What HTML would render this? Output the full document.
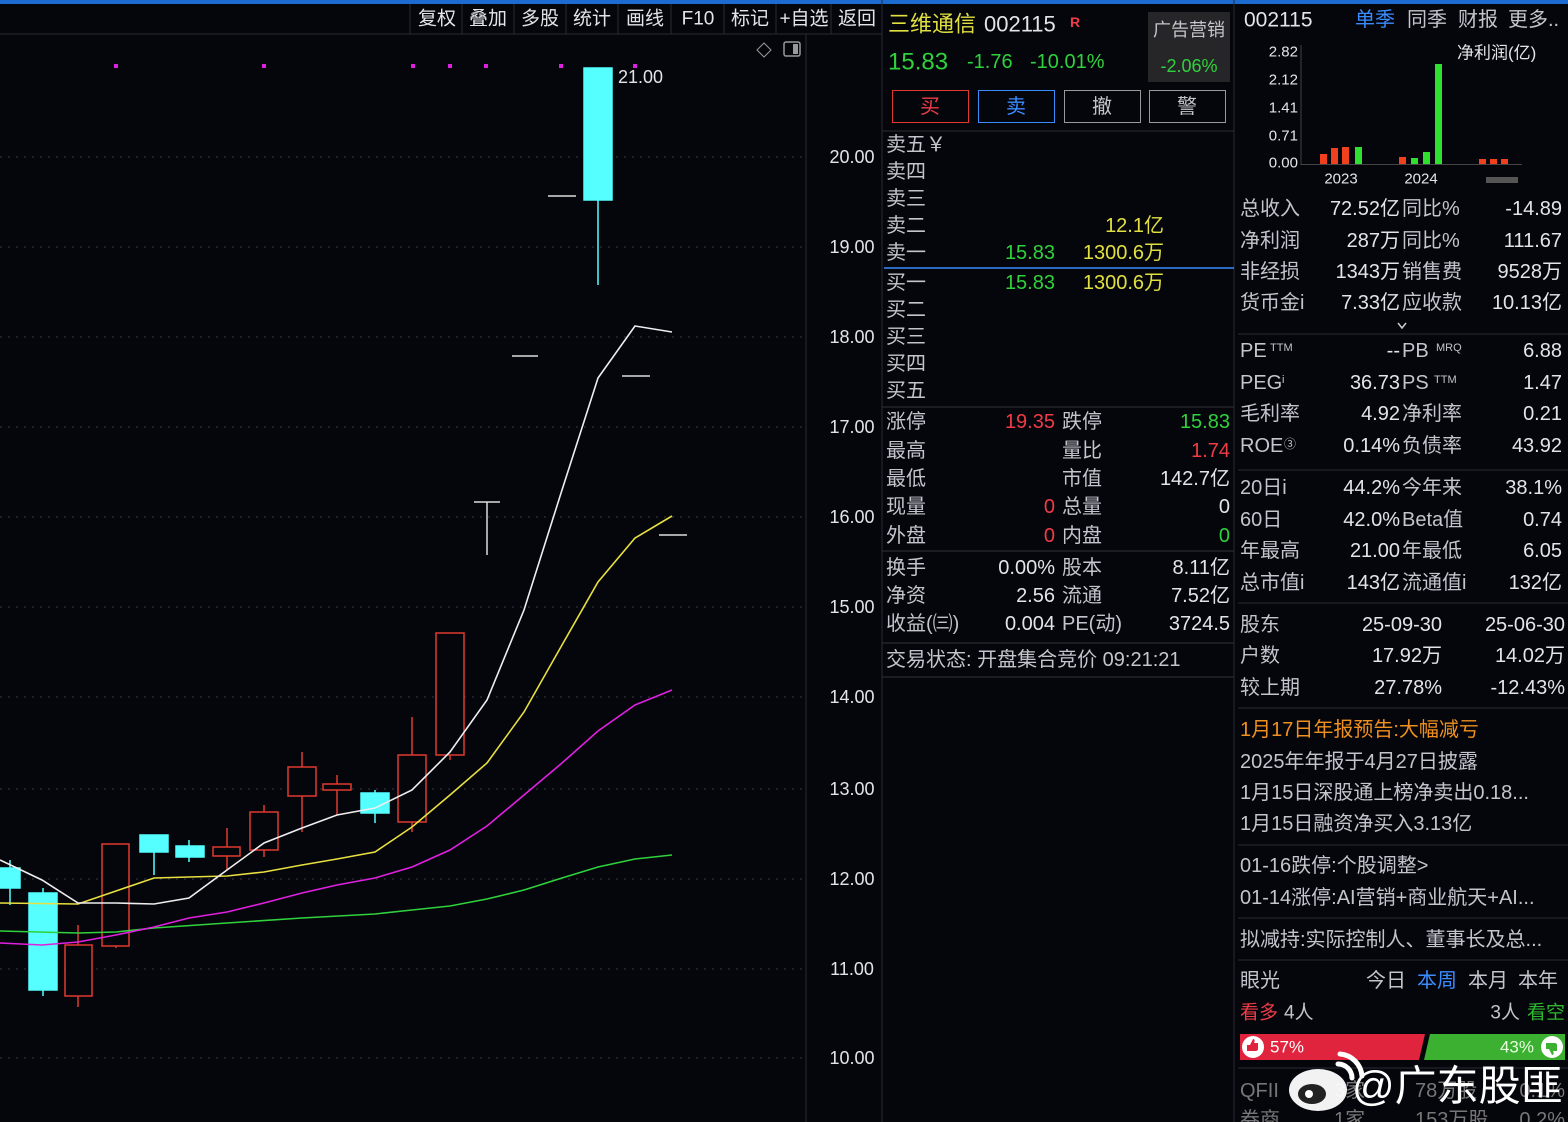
<!DOCTYPE html>
<html><head><meta charset="utf-8"><style>
html,body{margin:0;padding:0;background:#05050c;overflow:hidden}
svg{display:block}
text{font-family:"Liberation Sans","Noto Sans CJK SC",sans-serif;dominant-baseline:central}
.l{fill:#c4c4cc}.v{fill:#e4e4e8}.r{fill:#f03c46}.g{fill:#2fd23c}.y{fill:#e0e040}.b{fill:#3a8cff}
.e{text-anchor:end}.m{text-anchor:middle}
</style></head><body>
<svg width="1568" height="1122" viewBox="0 0 1568 1122" xmlns="http://www.w3.org/2000/svg" font-size="20">
<rect width="1568" height="1122" fill="#05050c"/>
<rect width="1568" height="4" fill="#1c6bd0"/>
<!-- toolbar -->
<line x1="0" y1="34" x2="882" y2="34" stroke="#2a2a33"/>
<line x1="410" y1="4" x2="410" y2="34" stroke="#2a2a33"/>
<g font-size="19">
<text x="437" y="19" class="m v">复权</text><text x="488" y="19" class="m v">叠加</text><text x="540" y="19" class="m v">多股</text><text x="592" y="19" class="m v">统计</text><text x="645" y="19" class="m v">画线</text><text x="698" y="19" class="m v">F10</text><text x="750" y="19" class="m v">标记</text><text x="804" y="19" class="m v">+自选</text><text x="857" y="19" class="m v">返回</text>
</g>
<g stroke="#2a2a33"><line x1="462" y1="4" x2="462" y2="34"/><line x1="514" y1="4" x2="514" y2="34"/><line x1="566" y1="4" x2="566" y2="34"/><line x1="618" y1="4" x2="618" y2="34"/><line x1="671" y1="4" x2="671" y2="34"/><line x1="724" y1="4" x2="724" y2="34"/><line x1="776" y1="4" x2="776" y2="34"/><line x1="831" y1="4" x2="831" y2="34"/></g>
<!-- axis -->
<line x1="806" y1="34" x2="806" y2="1122" stroke="#2a2a33"/>
<line x1="882" y1="0" x2="882" y2="1122" stroke="#2a2a33"/>
<line x1="1234" y1="0" x2="1234" y2="1122" stroke="#2a2a33"/>
<path d="M764 43l7 7-7 7-7-7z" fill="none" stroke="#999"/>
<rect x="784" y="42" width="16" height="14" rx="2" fill="none" stroke="#999" stroke-width="1.5"/><rect x="793" y="44" width="5" height="10" fill="#999"/>
<g font-size="18">
<text x="852" y="157" class="m v">20.00</text><text x="852" y="247" class="m v">19.00</text><text x="852" y="337" class="m v">18.00</text><text x="852" y="427" class="m v">17.00</text><text x="852" y="517" class="m v">16.00</text><text x="852" y="607" class="m v">15.00</text><text x="852" y="697" class="m v">14.00</text><text x="852" y="789" class="m v">13.00</text><text x="852" y="879" class="m v">12.00</text><text x="852" y="969" class="m v">11.00</text><text x="852" y="1058" class="m v">10.00</text>
</g>
<g stroke="#3a3a44" stroke-dasharray="2 6">
<line x1="0" y1="157" x2="806" y2="157"/><line x1="0" y1="247" x2="806" y2="247"/><line x1="0" y1="337" x2="806" y2="337"/><line x1="0" y1="427" x2="806" y2="427"/><line x1="0" y1="517" x2="806" y2="517"/><line x1="0" y1="607" x2="806" y2="607"/><line x1="0" y1="697" x2="806" y2="697"/><line x1="0" y1="789" x2="806" y2="789"/><line x1="0" y1="879" x2="806" y2="879"/><line x1="0" y1="969" x2="806" y2="969"/><line x1="0" y1="1058" x2="806" y2="1058"/>
</g>
<g fill="#e020e0"><rect x="114" y="64" width="4" height="4"/><rect x="262" y="64" width="4" height="4"/><rect x="411" y="64" width="4" height="4"/><rect x="448" y="64" width="4" height="4"/><rect x="484" y="64" width="4" height="4"/><rect x="559" y="64" width="4" height="4"/><rect x="633" y="64" width="4" height="4"/></g>
<!-- candles -->
<g stroke="#5ff" stroke-width="1.5" fill="#5ff">
<line x1="10" y1="860" x2="10" y2="905"/><rect x="0" y="868" width="20" height="20"/>
<line x1="43" y1="888" x2="43" y2="996"/><rect x="29" y="893" width="28" height="97"/>
<line x1="154" y1="850" x2="154" y2="875"/><rect x="140" y="835" width="28" height="17"/>
<line x1="189" y1="840" x2="189" y2="862"/><rect x="176" y="846" width="28" height="11"/>
<line x1="375" y1="790" x2="375" y2="823"/><rect x="361" y="793" width="28" height="20"/>
<line x1="598" y1="200" x2="598" y2="285"/><rect x="584" y="68" width="28" height="132"/>
</g>
<g stroke="#e03a30" stroke-width="1.5" fill="none">
<line x1="78" y1="925" x2="78" y2="1007"/><rect x="65" y="945" width="27" height="51" fill="#05050c"/>
<line x1="116" y1="844" x2="116" y2="948"/><rect x="102" y="844" width="27" height="102" fill="#05050c"/>
<line x1="227" y1="828" x2="227" y2="870"/><rect x="213" y="847" width="27" height="9" fill="#05050c"/>
<line x1="264" y1="805" x2="264" y2="857"/><rect x="250" y="812" width="28" height="38" fill="#05050c"/>
<line x1="302" y1="752" x2="302" y2="832"/><rect x="288" y="767" width="28" height="29" fill="#05050c"/>
<line x1="337" y1="775" x2="337" y2="815"/><rect x="323" y="784" width="28" height="6" fill="#05050c"/>
<line x1="412" y1="717" x2="412" y2="832"/><rect x="398" y="755" width="28" height="67" fill="#05050c"/>
<line x1="450" y1="633" x2="450" y2="760"/><rect x="436" y="633" width="28" height="122" fill="#05050c"/>
</g>
<g stroke="#ddd" stroke-width="1.5"><line x1="474" y1="502" x2="500" y2="502"/><line x1="487" y1="502" x2="487" y2="555"/><line x1="512" y1="356" x2="538" y2="356"/><line x1="548" y1="196" x2="576" y2="196"/><line x1="622" y1="376" x2="650" y2="376"/><line x1="659" y1="535" x2="687" y2="535"/></g>
<text x="618" y="77" class="v" font-size="18">21.00</text>
<!-- MAs -->
<g fill="none" stroke-width="1.6">
<polyline stroke="#2fd23c" points="0,931 78,933 116,932 154,928 227,923 302,918 375,914 412,910 450,906 487,899 524,890 562,878 598,867 635,859 672,855"/>
<polyline stroke="#e020e0" points="0,943 42,945 78,942 116,935 154,927 189,918 227,912 264,903 302,893 337,885 375,878 412,867 450,850 487,826 524,795 562,763 598,731 635,705 672,690"/>
<polyline stroke="#e8e040" points="0,903 78,904 154,878 189,877 227,876 264,872 302,865 337,859 375,852 412,827 450,795 487,763 524,712 562,645 598,582 635,538 672,516"/>
<polyline stroke="#eeeeee" points="0,860 42,880 78,903 116,903 154,904 189,898 227,870 264,843 302,828 337,815 375,808 412,790 450,752 487,700 524,610 562,490 598,378 635,326 672,332"/>
</g>
<!-- middle panel -->
<text x="888" y="24" class="y" font-size="22">三维通信</text><text x="984" y="24" class="v" font-size="22">002115</text><text x="1070" y="22" class="r" font-size="14" font-weight="bold">R</text>
<rect x="1148" y="12" width="82" height="70" fill="#262628"/>
<text x="1189" y="30" class="m l" font-size="18">广告营销</text><text x="1189" y="66" class="m g" font-size="18">-2.06%</text>
<text x="888" y="62" class="g" font-size="24">15.83</text><text x="967" y="62" class="g">-1.76</text><text x="1030" y="62" class="g">-10.01%</text>
<rect x="892.5" y="90.5" width="76" height="32" fill="none" stroke="#e03a30"/><text x="930" y="107" class="m r">买</text>
<rect x="978.5" y="90.5" width="76" height="32" fill="none" stroke="#3a8cff"/><text x="1016" y="107" class="m b">卖</text>
<rect x="1064.5" y="90.5" width="76" height="32" fill="none" stroke="#999"/><text x="1102" y="107" class="m l">撤</text>
<rect x="1149.5" y="90.5" width="76" height="32" fill="none" stroke="#999"/><text x="1187" y="107" class="m l">警</text>
<line x1="882" y1="131" x2="1234" y2="131" stroke="#2a2a33"/>
<text x="886" y="145" class="l">卖五￥</text><text x="886" y="172" class="l">卖四</text><text x="886" y="199" class="l">卖三</text><text x="886" y="226" class="l">卖二</text><text x="886" y="253" class="l">卖一</text>
<text x="1164" y="226" class="e y">12.1亿</text><text x="1055" y="253" class="e g">15.83</text><text x="1164" y="253" class="e y">1300.6万</text>
<line x1="884" y1="268" x2="1234" y2="268" stroke="#3a8cff" stroke-width="1.5"/>
<text x="886" y="283" class="l">买一</text><text x="886" y="310" class="l">买二</text><text x="886" y="337" class="l">买三</text><text x="886" y="364" class="l">买四</text><text x="886" y="391" class="l">买五</text>
<text x="1055" y="283" class="e g">15.83</text><text x="1164" y="283" class="e y">1300.6万</text>
<line x1="882" y1="407" x2="1234" y2="407" stroke="#333"/>
<text x="886" y="422" class="l">涨停</text><text x="1055" y="422" class="e r">19.35</text><text x="1062" y="422" class="l">跌停</text><text x="1230" y="422" class="e g">15.83</text>
<text x="886" y="451" class="l">最高</text><text x="1062" y="451" class="l">量比</text><text x="1230" y="451" class="e r">1.74</text>
<text x="886" y="479" class="l">最低</text><text x="1062" y="479" class="l">市值</text><text x="1230" y="479" class="e v">142.7亿</text>
<text x="886" y="507" class="l">现量</text><text x="1055" y="507" class="e r">0</text><text x="1062" y="507" class="l">总量</text><text x="1230" y="507" class="e v">0</text>
<text x="886" y="536" class="l">外盘</text><text x="1055" y="536" class="e r">0</text><text x="1062" y="536" class="l">内盘</text><text x="1230" y="536" class="e g">0</text>
<line x1="882" y1="551" x2="1234" y2="551" stroke="#333"/>
<text x="886" y="568" class="l">换手</text><text x="1055" y="568" class="e v">0.00%</text><text x="1062" y="568" class="l">股本</text><text x="1230" y="568" class="e v">8.11亿</text>
<text x="886" y="596" class="l">净资</text><text x="1055" y="596" class="e v">2.56</text><text x="1062" y="596" class="l">流通</text><text x="1230" y="596" class="e v">7.52亿</text>
<text x="886" y="624" class="l">收益(㈢)</text><text x="1055" y="624" class="e v">0.004</text><text x="1062" y="624" class="l">PE(动)</text><text x="1230" y="624" class="e v">3724.5</text>
<line x1="882" y1="643" x2="1234" y2="643" stroke="#333"/>
<text x="886" y="660" class="l">交易状态: 开盘集合竞价 09:21:21</text>
<line x1="882" y1="677" x2="1234" y2="677" stroke="#333"/>
<!-- right panel -->
<text x="1244" y="20" class="v" font-size="21">002115</text>
<text x="1355" y="20" class="b">单季</text><text x="1407" y="20" class="l">同季</text><text x="1458" y="20" class="l">财报</text><text x="1508" y="20" class="l">更多..</text>
<g font-size="15"><text x="1298" y="52" class="e v">2.82</text><text x="1298" y="80" class="e v">2.12</text><text x="1298" y="108" class="e v">1.41</text><text x="1298" y="136" class="e v">0.71</text><text x="1298" y="163" class="e v">0.00</text></g>
<line x1="1301" y1="45" x2="1301" y2="165" stroke="#444"/><line x1="1301" y1="164.5" x2="1522" y2="164.5" stroke="#444"/>
<text x="1457" y="53" class="v" font-size="17">净利润(亿)</text>
<g fill="#f0401e"><rect x="1320" y="154" width="7" height="10"/><rect x="1331" y="148" width="7" height="16"/><rect x="1342" y="147" width="7" height="17"/><rect x="1399" y="157" width="7" height="7"/><rect x="1479" y="159" width="7" height="5"/><rect x="1490" y="159" width="7" height="5"/><rect x="1501" y="159" width="7" height="5"/></g>
<g fill="#2fe030"><rect x="1355" y="147" width="7" height="17"/><rect x="1411" y="158" width="7" height="6"/><rect x="1423" y="152" width="7" height="12"/><rect x="1435" y="64" width="7" height="100"/></g>
<text x="1341" y="179" class="m v" font-size="15">2023</text><text x="1421" y="179" class="m v" font-size="15">2024</text><rect x="1486" y="177" width="32" height="6" fill="#555"/>
<text x="1240" y="209" class="l">总收入</text><text x="1400" y="209" class="e v">72.52亿</text><text x="1402" y="209" class="l">同比%</text><text x="1562" y="209" class="e v">-14.89</text>
<text x="1240" y="241" class="l">净利润</text><text x="1400" y="241" class="e v">287万</text><text x="1402" y="241" class="l">同比%</text><text x="1562" y="241" class="e v">111.67</text>
<text x="1240" y="272" class="l">非经损</text><text x="1400" y="272" class="e v">1343万</text><text x="1402" y="272" class="l">销售费</text><text x="1562" y="272" class="e v">9528万</text>
<text x="1240" y="303" class="l">货币金i</text><text x="1400" y="303" class="e v">7.33亿</text><text x="1402" y="303" class="l">应收款</text><text x="1562" y="303" class="e v">10.13亿</text>
<path d="M1398 323l4 5 4-5" fill="none" stroke="#ccc" stroke-width="1.5"/>
<line x1="1238" y1="334" x2="1568" y2="334" stroke="#2a2a33"/>
<text x="1240" y="351" class="l">PE</text><text x="1270" y="348" class="l" font-size="11">TTM</text><text x="1400" y="351" class="e v">--</text><text x="1402" y="351" class="l">PB</text><text x="1436" y="348" class="l" font-size="11">MRQ</text><text x="1562" y="351" class="e v">6.88</text>
<text x="1240" y="383" class="l">PEG</text><text x="1282" y="380" class="l" font-size="11">i</text><text x="1400" y="383" class="e v">36.73</text><text x="1402" y="383" class="l">PS</text><text x="1434" y="380" class="l" font-size="11">TTM</text><text x="1562" y="383" class="e v">1.47</text>
<text x="1240" y="414" class="l">毛利率</text><text x="1400" y="414" class="e v">4.92</text><text x="1402" y="414" class="l">净利率</text><text x="1562" y="414" class="e v">0.21</text>
<text x="1240" y="446" class="l">ROE</text><text x="1284" y="444" class="l" font-size="12">③</text><text x="1400" y="446" class="e v">0.14%</text><text x="1402" y="446" class="l">负债率</text><text x="1562" y="446" class="e v">43.92</text>
<line x1="1238" y1="470" x2="1568" y2="470" stroke="#2a2a33"/>
<text x="1240" y="488" class="l">20日i</text><text x="1400" y="488" class="e v">44.2%</text><text x="1402" y="488" class="l">今年来</text><text x="1562" y="488" class="e v">38.1%</text>
<text x="1240" y="520" class="l">60日</text><text x="1400" y="520" class="e v">42.0%</text><text x="1402" y="520" class="l">Beta值</text><text x="1562" y="520" class="e v">0.74</text>
<text x="1240" y="551" class="l">年最高</text><text x="1400" y="551" class="e v">21.00</text><text x="1402" y="551" class="l">年最低</text><text x="1562" y="551" class="e v">6.05</text>
<text x="1240" y="583" class="l">总市值i</text><text x="1400" y="583" class="e v">143亿</text><text x="1402" y="583" class="l">流通值i</text><text x="1562" y="583" class="e v">132亿</text>
<line x1="1238" y1="603" x2="1568" y2="603" stroke="#2a2a33"/>
<text x="1240" y="625" class="l">股东</text><text x="1442" y="625" class="e v">25-09-30</text><text x="1565" y="625" class="e v">25-06-30</text>
<text x="1240" y="656" class="l">户数</text><text x="1442" y="656" class="e v">17.92万</text><text x="1565" y="656" class="e v">14.02万</text>
<text x="1240" y="688" class="l">较上期</text><text x="1442" y="688" class="e v">27.78%</text><text x="1565" y="688" class="e v">-12.43%</text>
<line x1="1238" y1="708" x2="1568" y2="708" stroke="#2a2a33"/>
<text x="1240" y="730" fill="#f0901e">1月17日年报预告:大幅减亏</text>
<text x="1240" y="762" class="l">2025年年报于4月27日披露</text>
<text x="1240" y="793" class="l">1月15日深股通上榜净卖出0.18...</text>
<text x="1240" y="824" class="l">1月15日融资净买入3.13亿</text>
<line x1="1238" y1="845" x2="1568" y2="845" stroke="#2a2a33"/>
<text x="1240" y="866" class="l">01-16跌停:个股调整&gt;</text>
<text x="1240" y="898" class="l">01-14涨停:AI营销+商业航天+AI...</text>
<line x1="1238" y1="918" x2="1568" y2="918" stroke="#2a2a33"/>
<text x="1240" y="940" class="l">拟减持:实际控制人、董事长及总...</text>
<line x1="1238" y1="960" x2="1568" y2="960" stroke="#2a2a33"/>
<text x="1240" y="981" class="l">眼光</text><text x="1366" y="981" class="l">今日</text><text x="1417" y="981" class="b">本周</text><text x="1468" y="981" class="l">本月</text><text x="1518" y="981" class="l">本年</text>
<text x="1240" y="1013" class="r" font-size="19">看多</text><text x="1284" y="1013" class="l" font-size="19">4人</text><text x="1520" y="1013" class="e l" font-size="19">3人</text><text x="1565" y="1013" class="e" fill="#2fb82f" font-size="19">看空</text>
<path d="M1240 1034H1425L1419 1060H1240z" fill="#e0243e"/>
<path d="M1430 1034H1565V1060H1424z" fill="#3cb030"/>
<circle cx="1253" cy="1047" r="11" fill="#fff"/><circle cx="1552" cy="1047" r="11" fill="#fff"/>
<path d="M1247 1050v-5h3l3-6c2 0 2 2 1 4h4v6c0 1-1 2-2 2h-9z" fill="#e0243e"/>
<path d="M1546 1044v5h3l3 6c2 0 2-2 1-4h4v-6c0-1-1-2-2-2h-9z" fill="#3cb030"/>
<text x="1270" y="1047" fill="#fff" font-size="17">57%</text><text x="1534" y="1047" class="e" fill="#e8ffe0" font-size="17">43%</text>
<line x1="1238" y1="1068" x2="1568" y2="1068" stroke="#2a2a33"/>
<text x="1240" y="1091" fill="#777">QFII</text><text x="1334" y="1091" fill="#777">3家</text><text x="1415" y="1091" fill="#777">78万股</text><text x="1565" y="1091" class="e" fill="#777">0.1%</text>
<text x="1240" y="1120" fill="#777">券商</text><text x="1334" y="1120" fill="#777">1家</text><text x="1415" y="1120" fill="#777">153万股</text><text x="1565" y="1120" class="e" fill="#777">0.2%</text>
<!-- watermark -->
<ellipse cx="1318" cy="1090" rx="29" ry="21" fill="#fff" opacity=".95"/><ellipse cx="1312" cy="1094" rx="14" ry="10" fill="#222"/><circle cx="1309" cy="1094" r="4" fill="#fff"/>
<path d="M1338 1064a14 14 0 0 1 14 14M1340 1054a24 24 0 0 1 22 22" fill="none" stroke="#fff" stroke-width="5" stroke-linecap="round"/>
<text x="1352" y="1086" fill="#fff" font-size="42">@广东股匪</text>
</svg>
</body></html>
